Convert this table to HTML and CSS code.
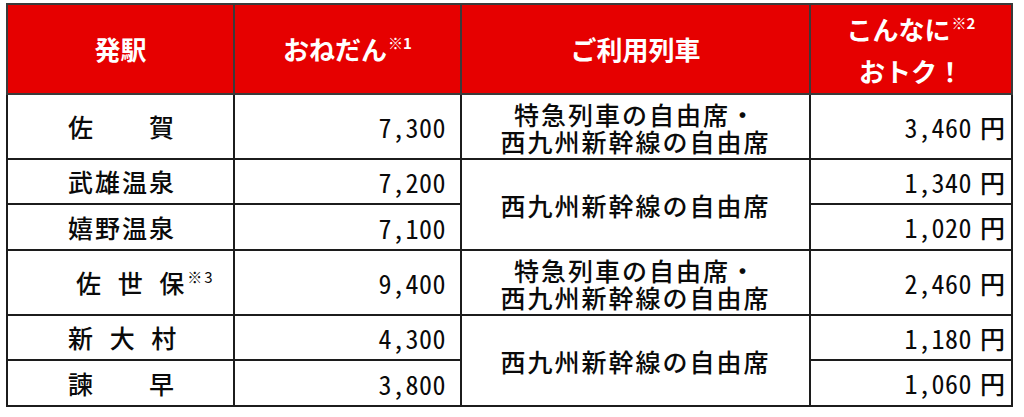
FILE: index.html
```html
<!DOCTYPE html>
<html lang="ja">
<head>
<meta charset="utf-8">
<title>おねだん表</title>
<link rel="stylesheet" href="styles.css">
</head>
<body>
<table class="fare">
  <colgroup>
    <col class="c1"><col class="c2"><col class="c3"><col class="c4">
  </colgroup>
  <thead>
    <tr class="head">
      <th>発駅</th>
      <th>おねだん<sup class="note">※1</sup></th>
      <th>ご利用列車</th>
      <th class="two"><span class="line">こんなに<sup class="note">※2</sup></span><span class="line">おトク！</span></th>
    </tr>
  </thead>
  <tbody>
    <tr class="r-tall">
      <td class="st">佐　　賀</td>
      <td class="num">7,300</td>
      <td class="train"><span class="line">特急列車の自由席・</span><span class="line">西九州新幹線の自由席</span></td>
      <td class="save">3,460<span class="yen">円</span></td>
    </tr>
    <tr class="r-a">
      <td class="st">武雄温泉</td>
      <td class="num">7,200</td>
      <td class="train" rowspan="2">西九州新幹線の自由席</td>
      <td class="save">1,340<span class="yen">円</span></td>
    </tr>
    <tr class="r-b">
      <td class="st">嬉野温泉</td>
      <td class="num">7,100</td>
      <td class="save">1,020<span class="yen">円</span></td>
    </tr>
    <tr class="r-tall">
      <td class="st st-spaced st-sasebo">佐 世 保<sup class="note n3">※3</sup></td>
      <td class="num">9,400</td>
      <td class="train"><span class="line">特急列車の自由席・</span><span class="line">西九州新幹線の自由席</span></td>
      <td class="save">2,460<span class="yen">円</span></td>
    </tr>
    <tr class="r-a">
      <td class="st st-spaced">新 大 村</td>
      <td class="num">4,300</td>
      <td class="train" rowspan="2">西九州新幹線の自由席</td>
      <td class="save">1,180<span class="yen">円</span></td>
    </tr>
    <tr class="r-b">
      <td class="st">諫　　早</td>
      <td class="num">3,800</td>
      <td class="save">1,060<span class="yen">円</span></td>
    </tr>
  </tbody>
</table>
</body>
</html>
```
FILE: styles.css
```css
html, body {
  margin: 0;
  background: #ffffff;
}
body {
  padding: 3px 0 0 6px;
  font-family: "Noto Sans CJK JP", "Noto Sans", sans-serif;
  color: #0a0a0a;
}
.fare {
  border-collapse: collapse;
  table-layout: fixed;
  width: 1005px;
  border: 2px solid #3a3a3a;
}
.c1 { width: 227px; }
.c2 { width: 227px; }
.c3 { width: 349px; }
.c4 { width: 202px; }

.fare th,
.fare td {
  border: 2px solid #1c1c1c;
  padding: 0;
  vertical-align: middle;
}
.head { height: 90px; }
.fare .head th {
  background: #e60000;
  color: #fff;
  font-weight: 700;
  font-size: 26px;
  line-height: 30px;
  text-align: center;
  border-color: #3a3a3a;
}
.line {
  display: block;
}
.fare .head th.two {
  padding-top: 2px;
}
.two .line + .line {
  margin-top: 12px;
}
.note {
  font-size: 15px;
  font-weight: 700;
  line-height: 0;
  vertical-align: 11px;
  margin-left: 1px;
}
.n3 {
  font-weight: 400;
  vertical-align: 10px;
}

.r-tall { height: 65px; }
.r-a { height: 45px; }
.r-b { height: 46px; }

.fare td {
  font-size: 25px;
  line-height: 27px;
  font-weight: 500;
}
.fare td.st {
  text-align: left;
  padding-left: 60px;
  letter-spacing: 2px;
}
.fare td.st-spaced {
  word-spacing: 7px;
}
.fare td.st-sasebo {
  padding-left: 68px;
}
.fare td.num,
.fare td.save {
  text-align: right;
  font-size: 26px;
  font-weight: 400;
  font-feature-settings: "hwid" 1;
  letter-spacing: 0.5px;
}
.fare td.num { padding-right: 14px; }
.fare td.save { padding-right: 6px; }
.yen {
  margin-left: 8px;
  letter-spacing: 0;
  font-size: 25px;
  font-weight: 500;
}
.fare td.train {
  text-align: center;
  letter-spacing: 2px;
  line-height: 27px;
  padding-top: 2px;
}
```
